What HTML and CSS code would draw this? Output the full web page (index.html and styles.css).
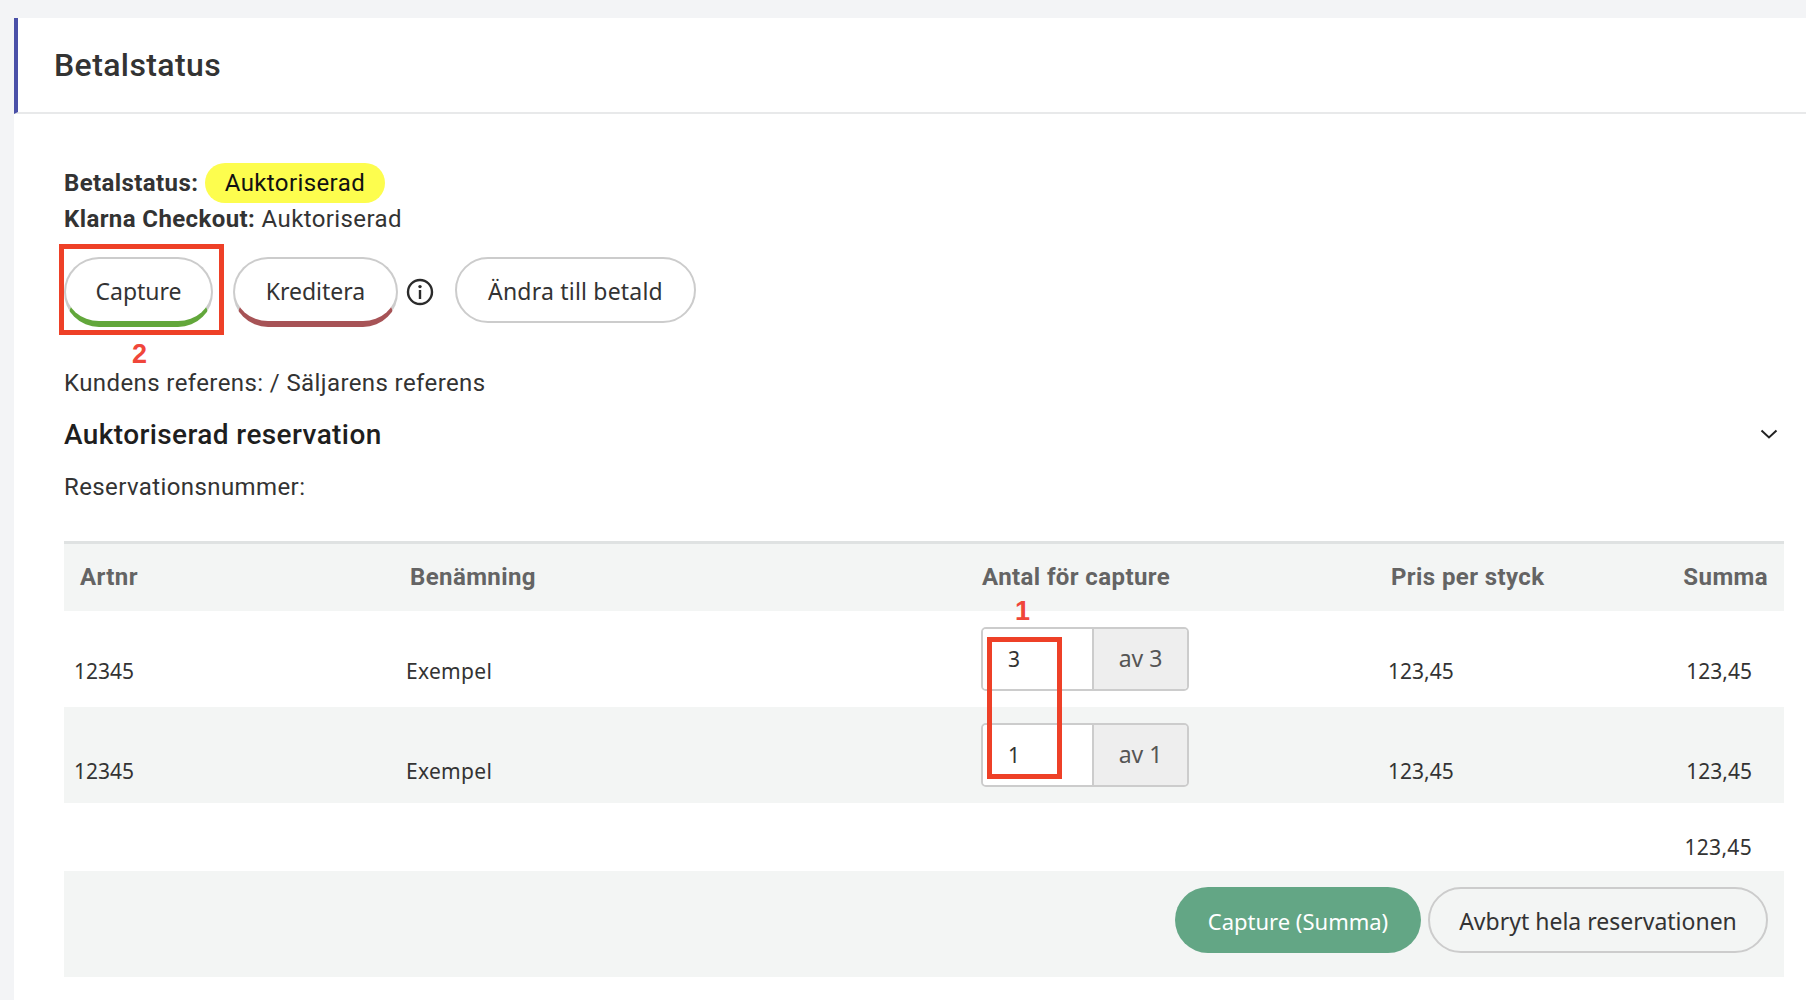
FILE: index.html
```html
<!DOCTYPE html>
<html lang="en">
<head>
    <meta charset="UTF-8">
    <meta name="viewport" content="width=device-width, initial-scale=1.0">
    <title>Betalstatus</title>
    <link rel="stylesheet" href="styles.css">
</head>
<body>

<div class="card">
    <div class="card-header">
        <h1>Betalstatus</h1>
    </div>

    <div class="card-body">
        <!-- Status -->
        <div class="status-line status-first"><b>Betalstatus:</b> <span class="badge">Auktoriserad</span></div>
        <div class="status-line"><b>Klarna Checkout:</b> Auktoriserad</div>

        <div class="actions">
            <button class="button button-capture">Capture</button>
            <button class="button button-credit">Kreditera</button>
            <svg class="info-icon" viewBox="0 0 28 28" width="28" height="28">
                <circle cx="14" cy="14" r="12" fill="none" stroke="#2b2b2b" stroke-width="2.4"/>
                <circle cx="14" cy="8.6" r="1.7" fill="#2b2b2b"/>
                <rect x="12.8" y="12" width="2.4" height="9" fill="#2b2b2b"/>
            </svg>
            <button class="button button-paid">Ändra till betald</button>
        </div>

        <p class="reference">Kundens referens: / Säljarens referens</p>

        <div class="section-head">
            <h2>Auktoriserad reservation</h2>
            <svg class="chevron" viewBox="0 0 18 10" width="18" height="10">
                <path d="M1.5 1.5 L9 8.5 L16.5 1.5" fill="none" stroke="#222" stroke-width="2"/>
            </svg>
        </div>
        <p class="reservation-no">Reservationsnummer:</p>

        <!-- Rows of the reservation -->
        <table class="order-table">
            <colgroup>
                <col class="col-artnr">
                <col class="col-name">
                <col class="col-qty">
                <col class="col-price">
                <col class="col-sum">
            </colgroup>
            <thead>
                <tr>
                    <th>Artnr</th>
                    <th>Benämning</th>
                    <th>Antal för capture</th>
                    <th>Pris per styck</th>
                    <th class="right">Summa</th>
                </tr>
            </thead>
            <tbody>
                <tr class="row-first">
                    <td>12345</td>
                    <td>Exempel</td>
                    <td class="qty-cell">
                        <div class="qty-group">
                            <input class="qty-input" type="text" value="3">
                            <span class="qty-of">av 3</span>
                        </div>
                    </td>
                    <td>123,45</td>
                    <td class="right">123,45</td>
                </tr>
                <tr class="row-alt">
                    <td>12345</td>
                    <td>Exempel</td>
                    <td class="qty-cell">
                        <div class="qty-group">
                            <input class="qty-input" type="text" value="1">
                            <span class="qty-of">av 1</span>
                        </div>
                    </td>
                    <td>123,45</td>
                    <td class="right">123,45</td>
                </tr>
                <tr class="row-total">
                    <td colspan="4"></td>
                    <td class="right">123,45</td>
                </tr>
            </tbody>
            <tfoot>
                <tr>
                    <td colspan="5">
                        <div class="footer-actions">
                            <button class="button button-primary">Capture (Summa)</button>
                            <button class="button button-cancel">Avbryt hela reservationen</button>
                        </div>
                    </td>
                </tr>
            </tfoot>
        </table>
    </div>
</div>

<!-- Annotations drawn on top of the screenshot -->
<div class="mark mark-capture"></div>
<div class="mark mark-qty"></div>
<span class="mark-no mark-no-2">2</span>
<span class="mark-no mark-no-1">1</span>

</body>
</html>
```

FILE: styles.css
```css
html, body {
    margin: 0;
    height: 1000px;
    overflow: hidden;
}
body {
    position: relative;
    padding: 18px 0 0 14px;
    box-sizing: border-box;
    background-color: #f3f4f6;
    font-family: 'Roboto', sans-serif;
    font-size: 24px;
    letter-spacing: 0.4px;
    color: #333;
}
.card {
    background-color: #ffffff;
    height: 982px;
}
.card-header {
    height: 96px;
    box-sizing: border-box;
    display: flex;
    align-items: center;
    padding-left: 36px;
    border-left: 4px solid #4a50a8;
    border-bottom: 2px solid #e8e9ea;
}
h1 {
    margin: 0;
    font-size: 32px;
    font-weight: 500;
    color: #333;
}
.card-body {
    padding: 0 22px 0 50px;
}
.status-line {
    height: 36px;
    line-height: 36px;
    white-space: nowrap;
}
.status-first {
    margin-top: 51px;
}
.status-line b {
    font-weight: 700;
}
.badge {
    display: inline-block;
    height: 40px;
    line-height: 40px;
    padding: 0 20px;
    border-radius: 20px;
    background-color: #fdfd4e;
    color: #111;
    vertical-align: middle;
    position: relative;
    top: -2px;
}
.actions {
    display: flex;
    align-items: flex-start;
    margin-top: 20px;
    height: 70px;
}
.button {
    height: 66px;
    box-sizing: border-box;
    padding: 2px 0 0;
    border: 2px solid #cccccc;
    border-radius: 33px;
    background-color: #ffffff;
    color: #333;
    font-family: 'Noto Sans', sans-serif;
    font-size: 23px;
    cursor: pointer;
}
.button-capture {
    width: 149px;
    height: 70px;
    border-bottom: 6px solid #62a73b;
    border-radius: 35px;
}
.button-credit {
    width: 165px;
    height: 70px;
    margin-left: 20px;
    border-bottom: 6px solid #a75356;
    border-radius: 35px;
}
.info-icon {
    margin: 21px 0 0 8px;
}
.button-paid {
    width: 241px;
    margin-left: 21px;
    letter-spacing: 0.2px;
}
.reference {
    margin: 40px 0 0;
    line-height: 32px;
}
.section-head {
    display: flex;
    justify-content: space-between;
    align-items: center;
    height: 36px;
    margin-top: 17px;
    padding-right: 6px;
}
h2 {
    margin: 0;
    font-size: 28px;
    font-weight: 500;
    color: #1e1e1e;
}
.reservation-no {
    margin: 19px 0 0;
    line-height: 32px;
}
.order-table {
    width: 1720px;
    margin-top: 38px;
    border-collapse: collapse;
    table-layout: fixed;
    font-family: 'Noto Sans', sans-serif;
    font-size: 21px;
    letter-spacing: 0;
}
.col-artnr { width: 333px; }
.col-name { width: 575px; }
.col-qty { width: 409px; }
.col-price { width: 220px; }
.col-sum { width: 183px; }
.order-table thead tr {
    height: 68px;
    background-color: #f3f5f4;
}
th {
    padding: 0 0 0 10px;
    border-top: 3px solid #dfe2e2;
    text-align: left;
    font-family: 'Roboto', sans-serif;
    font-size: 24px;
    font-weight: 700;
    letter-spacing: 0.4px;
    color: #646464;
}
th:first-child {
    padding-left: 16px;
}
th:nth-child(2) {
    padding-left: 13px;
}
th.right {
    padding-right: 16px;
    text-align: right;
}
td {
    padding: 0 32px 20px 10px;
    line-height: 32px;
    vertical-align: bottom;
    color: #333;
}
td:nth-child(2) {
    padding-left: 9px;
    letter-spacing: 0.3px;
}
td:nth-child(4) {
    padding-left: 7px;
}
td.right {
    text-align: right;
}
.row-first {
    height: 96px;
}
.row-alt {
    height: 96px;
    background-color: #f3f5f4;
}
.row-alt td {
    padding-bottom: 16px;
}
.row-total {
    height: 68px;
}
.row-total td {
    padding-bottom: 8px;
}
.row-first .qty-cell,
.row-alt .qty-cell {
    padding: 16px 0 0 9px;
    vertical-align: top;
}
.qty-group {
    display: flex;
    width: 208px;
    height: 64px;
    box-sizing: border-box;
    border: 2px solid #cccccc;
    border-radius: 5px;
    overflow: hidden;
}
.qty-input {
    width: 111px;
    box-sizing: border-box;
    padding: 0 0 0 25px;
    border: none;
    border-right: 2px solid #cccccc;
    outline: none;
    background-color: #ffffff;
    color: #333;
    font-family: 'Noto Sans', sans-serif;
    font-size: 21px;
}
.qty-of {
    flex: 1;
    display: flex;
    align-items: center;
    justify-content: center;
    padding-bottom: 2px;
    background-color: #eeeeee;
    color: #555;
    font-size: 23px;
}
tfoot tr {
    height: 106px;
    background-color: #f3f5f4;
}
tfoot td {
    padding: 0 16px 24px 0;
    vertical-align: bottom;
}
.footer-actions {
    display: flex;
    justify-content: flex-end;
    gap: 7px;
}
.button-primary {
    width: 246px;
    border: none;
    background-color: #63a685;
    color: #ffffff;
    font-size: 22px;
}
.button-cancel {
    width: 340px;
    background-color: transparent;
}
.mark {
    position: absolute;
    box-sizing: border-box;
    border: 5px solid #ee4027;
}
.mark-capture {
    left: 59px;
    top: 244px;
    width: 165px;
    height: 91px;
}
.mark-qty {
    left: 987px;
    top: 637px;
    width: 75px;
    height: 142px;
}
.mark-no {
    position: absolute;
    font-family: 'Liberation Sans', sans-serif;
    font-size: 27px;
    font-weight: 700;
    letter-spacing: 0;
    color: #f0463a;
}
.mark-no-2 {
    left: 132px;
    top: 339px;
}
.mark-no-1 {
    left: 1015px;
    top: 596px;
}
```
